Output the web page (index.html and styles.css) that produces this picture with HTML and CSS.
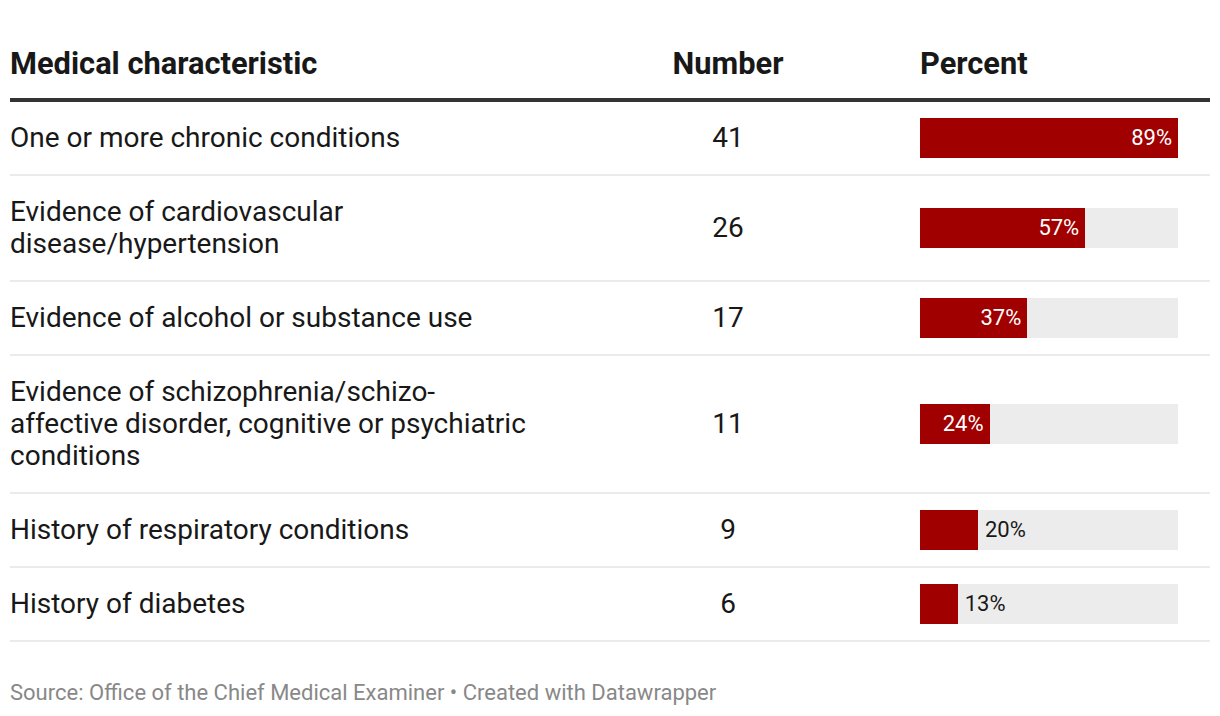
FILE: index.html
```html
<!DOCTYPE html>
<html lang="en">
<head>
<meta charset="utf-8">
<title>Medical characteristics</title>
<link rel="stylesheet" href="styles.css">
</head>
<body>
<div class="chart">
  <div class="row head">
    <div class="cell name">Medical characteristic</div>
    <div class="cell num">Number</div>
    <div class="cell pct-head">Percent</div>
  </div>

  <div class="row">
    <div class="cell name">One or more chronic conditions</div>
    <div class="cell num">41</div>
    <div class="cell pct"><div class="track"><div class="fill" style="width:100%"><span class="in">89%</span></div></div></div>
  </div>

  <div class="row">
    <div class="cell name">Evidence of cardiovascular disease/hypertension</div>
    <div class="cell num">26</div>
    <div class="cell pct"><div class="track"><div class="fill" style="width:64.04%"><span class="in">57%</span></div></div></div>
  </div>

  <div class="row">
    <div class="cell name">Evidence of alcohol or substance use</div>
    <div class="cell num">17</div>
    <div class="cell pct"><div class="track"><div class="fill" style="width:41.57%"><span class="in">37%</span></div></div></div>
  </div>

  <div class="row">
    <div class="cell name">Evidence of schizophrenia/schizo-affective disorder, cognitive or psychiatric conditions</div>
    <div class="cell num">11</div>
    <div class="cell pct"><div class="track"><div class="fill" style="width:26.97%"><span class="in">24%</span></div></div></div>
  </div>

  <div class="row">
    <div class="cell name">History of respiratory conditions</div>
    <div class="cell num">9</div>
    <div class="cell pct"><div class="track"><div class="fill" style="width:22.47%"></div><span class="out">20%</span></div></div>
  </div>

  <div class="row">
    <div class="cell name">History of diabetes</div>
    <div class="cell num">6</div>
    <div class="cell pct"><div class="track"><div class="fill" style="width:14.61%"></div><span class="out">13%</span></div></div>
  </div>

  <div class="footer">Source: Office of the Chief Medical Examiner • Created with Datawrapper</div>
</div>
</body>
</html>
```

FILE: styles.css
```css
html, body {
  margin: 0;
  padding: 0;
  background: #ffffff;
}

body {
  font-family: Roboto, "Liberation Sans", Arial, sans-serif;
  color: #181818;
}

.chart {
  padding: 0 10px;
}

.row {
  display: grid;
  grid-template-columns: 530px 376px 1fr;
  align-items: center;
  border-bottom: 2px solid #ebebeb;
}

.row.head {
  border-bottom: 4px solid #333333;
}

.cell {
  font-size: 28px;
  line-height: 32px;
  padding: 20px 0;
}

.head .cell {
  font-weight: 700;
  font-size: 30.8px;
  line-height: 34px;
  padding: 47px 0 17px;
}

.name {
  padding-right: 10px;
}

.num {
  text-align: center;
}

.head .cell.pct-head {
  padding-left: 4px;
}

.cell.pct {
  padding: 16px 32px 16px 4px;
}

.track {
  height: 40px;
  background: #ececec;
  display: flex;
  align-items: center;
}

.fill {
  height: 40px;
  background: #a00000;
  display: flex;
  align-items: center;
  justify-content: flex-end;
}

.in {
  color: #ffffff;
  font-size: 22px;
  line-height: 40px;
  padding-right: 6px;
}

.out {
  color: #181818;
  font-size: 22px;
  line-height: 40px;
  margin-left: 7px;
}

.footer {
  margin-top: 38px;
  font-size: 22px;
  line-height: 26px;
  color: #888888;
}
```
